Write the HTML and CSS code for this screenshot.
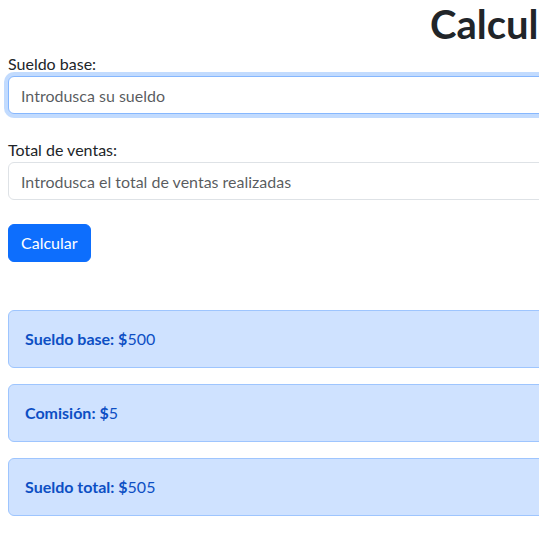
FILE: index.html
```html
<!DOCTYPE html>
<html lang="es">
<head>
<meta charset="utf-8">
<title>Calculadora de sueldo</title>
<link rel="stylesheet" href="styles.css">
</head>
<body>
<div class="container">
  <h1 class="title">Calculadora de sueldo</h1>
  <form class="form">
    <div class="field">
      <label class="label" for="sueldo">Sueldo base:</label>
      <input class="control control-focus" id="sueldo" type="text" placeholder="Introdusca su sueldo">
    </div>
    <div class="field">
      <label class="label" for="ventas">Total de ventas:</label>
      <input class="control" id="ventas" type="text" placeholder="Introdusca el total de ventas realizadas">
    </div>
    <button class="btn" type="button">Calcular</button>
  </form>
  <div class="results">
    <div class="alert"><strong>Sueldo base: $</strong>500</div>
    <div class="alert"><strong>Comisión: $</strong>5</div>
    <div class="alert"><strong>Sueldo total: $</strong>505</div>
  </div>
</div>
</body>
</html>
```
FILE: styles.css
```css
html, body {
  margin: 0;
  overflow: hidden;
}
body {
  font-family: Lato, "Liberation Sans", sans-serif;
  font-size: 16px;
  line-height: 1.5;
  color: #212529;
  background: #fff;
}
.container {
  width: 1234px;
  padding: 0 8px;
}
.title {
  margin: 0 0 4px;
  font-size: 40px;
  font-weight: 700;
  line-height: 48px;
  text-align: center;
}
.form {
  display: flex;
  flex-direction: column;
  align-items: flex-start;
}
.field {
  align-self: stretch;
  margin-bottom: 24px;
}
.label {
  display: block;
  line-height: 24px;
}
.control {
  display: block;
  box-sizing: border-box;
  width: 100%;
  height: 38px;
  padding: 6px 12px;
  font: inherit;
  color: #212529;
  background: #fff;
  border: 1px solid #dee2e6;
  border-radius: 6px;
  outline: none;
}
.control::placeholder {
  color: rgba(33, 37, 41, 0.75);
}
.control-focus {
  border-color: #86b7fe;
  box-shadow: 0 0 0 4px rgba(13, 110, 253, 0.25);
}
.btn {
  height: 38px;
  padding: 6px 12px;
  font: inherit;
  color: #fff;
  background: #0d6efd;
  border: 1px solid #0d6efd;
  border-radius: 6px;
}
.results {
  margin-top: 48px;
  display: flex;
  flex-direction: column;
  gap: 16px;
}
.alert {
  padding: 16px;
  line-height: 24px;
  color: #0d4fc4;
  background: #cfe2ff;
  border: 1px solid #9ec5fe;
  border-radius: 6px;
}
.alert strong {
  font-weight: 700;
}
```
